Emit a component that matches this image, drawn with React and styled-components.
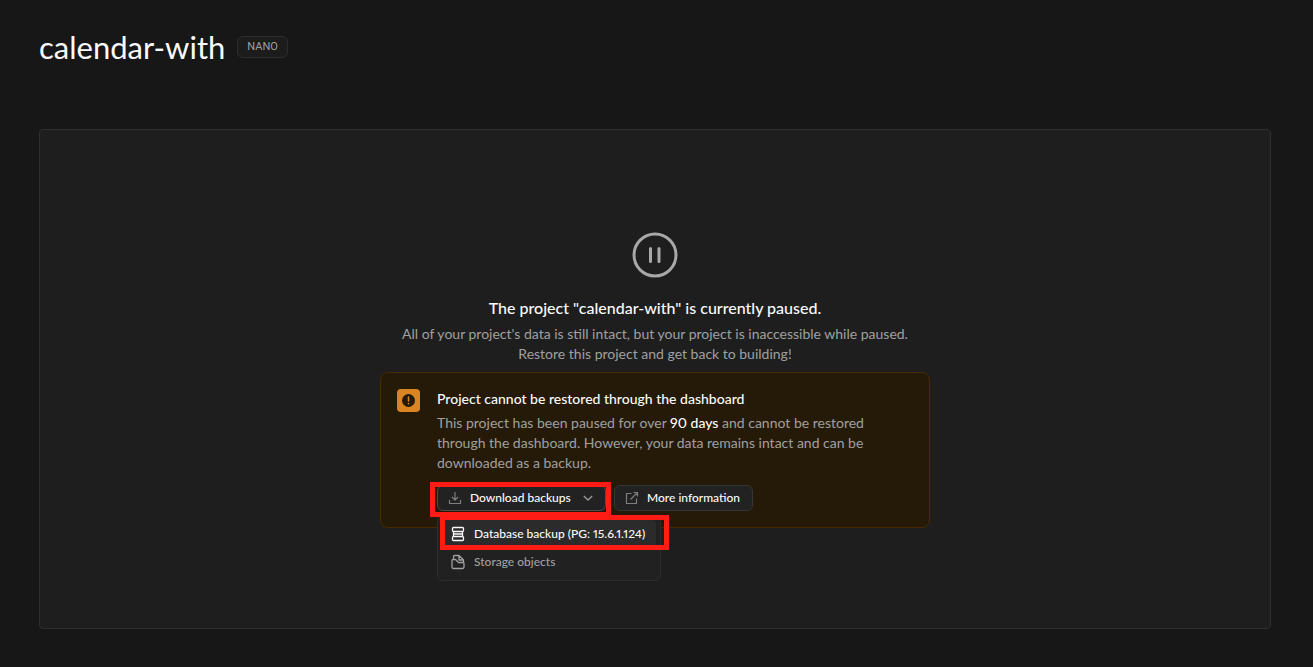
import React, { useState } from "react";
import styled, { createGlobalStyle } from "styled-components";

const GlobalStyle = createGlobalStyle`
  *, *::before, *::after {
    box-sizing: border-box;
  }
  body {
    margin: 0;
    background: #171717;
    color: #fafafa;
    font-family: Lato, "Liberation Sans", sans-serif;
    font-size: 14px;
    font-variant-numeric: proportional-nums;
    line-height: 20px;
    -webkit-font-smoothing: antialiased;
  }
  h1, h2, h3, p {
    margin: 0;
    font-weight: 400;
  }
  button {
    font-family: inherit;
    font-variant-numeric: inherit;
    cursor: pointer;
  }
`;
const StyledPage = styled.main`
  display: flex;
  flex-direction: column;
  gap: 64px;
  min-height: 100vh;
  padding: 29px 42px 38px 39px;
`;
const StyledHeader = styled.header`
  display: flex;
  align-items: center;
  gap: 12px;
`;
const StyledTitle = styled.h1`
  font-size: 31px;
  line-height: 36px;
`;
const StyledBadge = styled.span`
  padding: 0 9px;
  border: 1px solid #2e2e2e;
  border-radius: 6px;
  background: #1c1c1c;
  color: #a0a0a0;
  font-family: Roboto, sans-serif;
  font-size: 11px;
  line-height: 20px;
`;
const StyledPanel = styled.section`
  display: flex;
  flex: 1;
  flex-direction: column;
  align-items: center;
  justify-content: center;
  padding-top: 2px;
  border: 1px solid #2e2e2e;
  border-radius: 4px;
  background: #1e1e1e;
`;
const StyledPauseIcon = styled.svg`
  width: 46px;
  height: 46px;
  margin-bottom: 18px;
  color: #a8a8a8;
`;
const StyledHeading = styled.h2`
  margin-bottom: 4px;
  font-size: 16px;
  font-weight: 500;
  line-height: 24px;
`;
const StyledText = styled.p`
  max-width: ${(props) => (props.$narrow ? "460px" : "550px")};
  color: #a0a0a0;
  text-align: ${(props) => (props.$narrow ? "left" : "center")};
`;
const StyledAlert = styled.div`
  display: flex;
  gap: 17px;
  width: 100%;
  max-width: 550px;
  margin-top: 8px;
  padding: 16px;
  border: 1px solid #4a2900;
  border-radius: 8px;
  background: #251a08;
`;
const StyledAlertIcon = styled.span`
  display: flex;
  flex-shrink: 0;
  align-items: center;
  justify-content: center;
  width: 23px;
  height: 23px;
  border-radius: 4px;
  background: #db8423;
  color: #251a08;
`;
const StyledAlertTitle = styled.h3`
  margin-bottom: 4px;
  font-size: 14px;
  font-weight: 500;
`;
const StyledStrong = styled.strong`
  color: #fafafa;
  font-weight: 500;
`;
const StyledActions = styled.div`
  display: flex;
  gap: 8px;
  margin-top: 12px;
`;
const StyledDropdown = styled.div`
  position: relative;
`;
const StyledButton = styled.button`
  display: flex;
  align-items: center;
  gap: 8px;
  min-width: ${(props) => (props.$wide ? "169px" : "139px")};
  height: 26px;
  padding: 0 10px;
  border: 1px solid ${(props) => (props.$open ? "#4d4d4d" : "#363636")};
  border-radius: 6px;
  background: #222222;
  color: #fafafa;
  font-size: 12px;
  font-weight: 500;
  line-height: 16px;
  text-decoration: none;
  white-space: nowrap;

  svg {
    flex-shrink: 0;
    color: #7e7e7e;
  }
  svg:last-child {
    margin-left: auto;
    color: #a0a0a0;
  }
`;
const StyledMenu = styled.div`
  position: absolute;
  z-index: 1;
  top: calc(100% + 4px);
  left: 0;
  width: 224px;
  padding: 4px;
  border: 1px solid #2e2e2e;
  border-radius: 6px;
  background: #212121;
`;
const StyledMenuItem = styled.button`
  display: flex;
  align-items: center;
  gap: 8px;
  width: 100%;
  height: 28px;
  padding: 0 8px;
  border: none;
  border-radius: 4px;
  background: ${(props) => (props.$active ? "#2b2b2b" : "transparent")};
  color: ${(props) => (props.$active ? "#fafafa" : "#a0a0a0")};
  font-size: 12px;
  font-weight: 500;
  line-height: 16px;
  white-space: nowrap;

  svg {
    flex-shrink: 0;
  }
`;
const StyledMark = styled.span`
  position: absolute;
  z-index: 2;
  inset: ${(props) => props.$inset};
  border: 5px solid #ff1c14;
  pointer-events: none;
`;

const PauseIcon = () => (
  <StyledPauseIcon viewBox="0 0 46 46" fill="none" stroke="currentColor">
    <circle cx="23" cy="23" r="21" strokeWidth="3" />
    <path d="M18.5 16.5v13M27 16.5v13" strokeWidth="3" strokeLinecap="round" />
  </StyledPauseIcon>
);

const WarningIcon = () => (
  <svg width="13" height="13" viewBox="0 0 13 13">
    <circle cx="6.5" cy="6.5" r="6.5" fill="currentColor" />
    <path
      d="M6.5 3v4M6.5 9.5v.2"
      stroke="#db8423"
      strokeWidth="1.5"
      strokeLinecap="round"
    />
  </svg>
);

const SmallIcon = ({ d }) => (
  <svg
    width="14"
    height="14"
    viewBox="0 0 14 14"
    fill="none"
    stroke="currentColor"
    strokeWidth="1.2"
    strokeLinejoin="round"
  >
    <path d={d} />
  </svg>
);

const MenuIcon = ({ d }) => (
  <svg
    width="16"
    height="16"
    viewBox="0 0 16 16"
    fill="none"
    stroke="currentColor"
    strokeWidth="1.3"
    strokeLinejoin="round"
  >
    <path d={d} />
  </svg>
);

const icons = {
  download: "M7 1v8M3.8 5.800L7 9l3.200-3.200M1.500 9v3.500h11V9",
  chevron: "M2.800 5L7 9l4.200-4",
  external: "M6.500 2.500h-5v10h10v-5M5.500 8.500l7-7M8.500 1.500h4v4",
  database:
    "M3.500 1.500h9a1 1 0 0 1 1 1v2a1 1 0 0 1-1 1h-9a1 1 0 0 1-1-1v-2a1 1 0 0 1 1-1zM3.500 10.500h9a1 1 0 0 1 1 1v2a1 1 0 0 1-1 1h-9a1 1 0 0 1-1-1v-2a1 1 0 0 1 1-1zM3.500 5.500v5M12.500 5.500v5M3.500 8h9",
  storage:
    "M3.500 5.500v-3a1 1 0 0 1 1-1h4.500l4.500 4.500v2.500M9 1.500v4.500h4.500M3 5.500h2.500l3 3h4.500a1 1 0 0 1 1 1v3.500a1.500 1.500 0 0 1-1.500 1.500h-9A1.500 1.500 0 0 1 2 13V6.500a1 1 0 0 1 1-1z",
};

const App = () => {
  const [open, setOpen] = useState(true);

  return (
    <>
      <GlobalStyle />
      <StyledPage>
        <StyledHeader>
          <StyledTitle>calendar-with</StyledTitle>
          <StyledBadge>NANO</StyledBadge>
        </StyledHeader>
        <StyledPanel>
          <PauseIcon />
          <StyledHeading>
            The project "calendar-with" is currently paused.
          </StyledHeading>
          <StyledText>
            All of your project's data is still intact, but your project is
            inaccessible while paused.
            <br />
            Restore this project and get back to building!
          </StyledText>
          <StyledAlert>
            <StyledAlertIcon>
              <WarningIcon />
            </StyledAlertIcon>
            <div>
              <StyledAlertTitle>
                Project cannot be restored through the dashboard
              </StyledAlertTitle>
              <StyledText $narrow>
                This project has been paused for over{" "}
                <StyledStrong>90 days</StyledStrong> and cannot be restored
                through the dashboard. However, your data remains intact and can
                be downloaded as a backup.
              </StyledText>
              <StyledActions>
                <StyledDropdown>
                  <StyledButton
                    type="button"
                    $wide
                    $open={open}
                    aria-expanded={open}
                    onClick={() => setOpen(!open)}
                  >
                    <SmallIcon d={icons.download} />
                    <span>Download backups</span>
                    <SmallIcon d={icons.chevron} />
                  </StyledButton>
                  <StyledMark $inset="-3px -5px -6px -7px" />
                  {open && (
                    <StyledMenu role="menu">
                      <StyledMenuItem type="button" role="menuitem" $active>
                        <MenuIcon d={icons.database} />
                        Database backup (PG: 15.6.1.124)
                      </StyledMenuItem>
                      <StyledMenuItem type="button" role="menuitem">
                        <MenuIcon d={icons.storage} />
                        Storage objects
                      </StyledMenuItem>
                      <StyledMark $inset="-1px -9px 30px 2px" />
                    </StyledMenu>
                  )}
                </StyledDropdown>
                <StyledButton as="a" href="#more">
                  <SmallIcon d={icons.external} />
                  <span>More information</span>
                </StyledButton>
              </StyledActions>
            </div>
          </StyledAlert>
        </StyledPanel>
      </StyledPage>
    </>
  );
};

export default App;
